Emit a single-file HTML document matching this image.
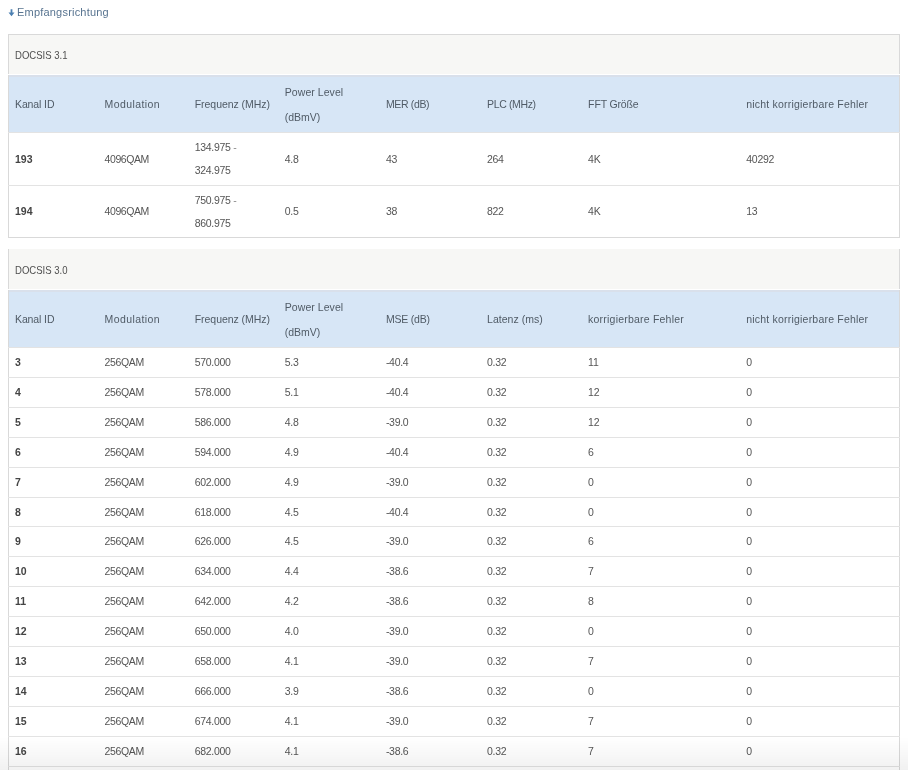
<!DOCTYPE html>
<html><head><meta charset="utf-8"><style>
body{-webkit-font-smoothing:antialiased}
.t,.link{will-change:transform}
html,body{margin:0;padding:0;background:#fff;width:908px;height:770px;overflow:hidden;position:relative}
body{font-family:"Liberation Sans",sans-serif;color:#555;font-size:10.5px}
.link{position:absolute;left:0;top:0;width:200px;height:30px;color:#587490;font-size:11px;white-space:nowrap}
.link svg{position:absolute;left:8px;top:9px}
.link span{position:absolute;left:17px;top:5px;letter-spacing:0.2px;line-height:14px}
.bot{position:absolute;left:0;top:737px;width:908px;height:33px;background:linear-gradient(rgba(0,0,0,0),rgba(0,0,0,0.055))}
.t{position:absolute;left:8px;width:892px;border-collapse:collapse;table-layout:fixed;border:1px solid #d9d9d9}
.t td,.t th{padding:0 0 0 6px;text-align:left;font-weight:normal;vertical-align:middle;white-space:nowrap;overflow:hidden}
.t2{border-top:0}
.t2 .cap td{height:39px;padding-top:1px}
.cap td{height:39px;background:#f7f7f5;border-bottom:1px solid #fff;color:#4f4f4f}
.hd th{height:55px;padding-top:2px;background:#d7e6f6;box-shadow:inset 0 2px 0 #d9e0eb;line-height:25px;color:#505b66}
.r2 td{height:52px;line-height:23px;border-top:1px solid #e3e3e3}
.r1 td{height:28px;padding-bottom:1px;border-top:1px solid #e3e3e3}
.r1.short td{height:27px}
.r2.short td{height:51px}
.r1 td,.r2 td{letter-spacing:-0.28px}
.r1 td:first-child,.r2 td:first-child{font-weight:bold;color:#444;letter-spacing:0}
.hy{color:#8a8a8a;letter-spacing:0}
</style></head><body>
<div class="link"><svg width="7" height="8" viewBox="0 0 7 8"><path d="M2.6 0.3H4.4V3.4H6.5L3.5 7.2L0.5 3.4H2.6Z" fill="#4c80b2"/></svg><span>Empfangsrichtung</span></div>
<table class="t" style="top:34px"><colgroup><col style="width:90px"><col style="width:90px"><col style="width:90px"><col style="width:101px"><col style="width:101px"><col style="width:101px"><col style="width:158px"><col style="width:159px"></colgroup><tr class="cap"><td colspan="8"><span style="display:inline-block;transform:scaleX(0.91);transform-origin:0 50%">DOCSIS 3.1</span></td></tr><tr class="hd"><th><span style="letter-spacing:-0.114px">Kanal ID</span></th><th><span style="letter-spacing:0.401px">Modulation</span></th><th><span style="letter-spacing:-0.038px">Frequenz (MHz)</span></th><th><span style="letter-spacing:0.06px">Power Level</span><br><span style="letter-spacing:-0.04px">(dBmV)</span></th><th><span style="letter-spacing:-0.34px">MER (dB)</span></th><th><span style="letter-spacing:-0.35px">PLC (MHz)</span></th><th><span style="letter-spacing:-0.145px">FFT Größe</span></th><th><span style="letter-spacing:0.204px">nicht korrigierbare Fehler</span></th></tr><tr class="r2"><td>193</td><td><span style="letter-spacing:-0.43px">4096QAM</span></td><td>134.975 <span class=hy>-</span><br>324.975</td><td>4.8</td><td>43</td><td>264</td><td>4K</td><td>40292</td></tr><tr class="r2 short"><td>194</td><td><span style="letter-spacing:-0.43px">4096QAM</span></td><td>750.975 <span class=hy>-</span><br>860.975</td><td>0.5</td><td>38</td><td>822</td><td>4K</td><td>13</td></tr></table>
<table class="t t2" style="top:249px"><colgroup><col style="width:90px"><col style="width:90px"><col style="width:90px"><col style="width:101px"><col style="width:101px"><col style="width:101px"><col style="width:158px"><col style="width:159px"></colgroup><tr class="cap"><td colspan="8"><span style="display:inline-block;transform:scaleX(0.91);transform-origin:0 50%">DOCSIS 3.0</span></td></tr><tr class="hd"><th><span style="letter-spacing:-0.114px">Kanal ID</span></th><th><span style="letter-spacing:0.401px">Modulation</span></th><th><span style="letter-spacing:-0.038px">Frequenz (MHz)</span></th><th><span style="letter-spacing:0.06px">Power Level</span><br><span style="letter-spacing:-0.04px">(dBmV)</span></th><th><span style="letter-spacing:-0.2px">MSE (dB)</span></th><th><span style="letter-spacing:0.04px">Latenz (ms)</span></th><th><span style="letter-spacing:0.211px">korrigierbare Fehler</span></th><th><span style="letter-spacing:0.204px">nicht korrigierbare Fehler</span></th></tr><tr class="r1"><td>3</td><td><span style="letter-spacing:-0.36px">256QAM</span></td><td>570.000</td><td>5.3</td><td>-40.4</td><td>0.32</td><td>11</td><td>0</td></tr><tr class="r1"><td>4</td><td><span style="letter-spacing:-0.36px">256QAM</span></td><td>578.000</td><td>5.1</td><td>-40.4</td><td>0.32</td><td>12</td><td>0</td></tr><tr class="r1"><td>5</td><td><span style="letter-spacing:-0.36px">256QAM</span></td><td>586.000</td><td>4.8</td><td>-39.0</td><td>0.32</td><td>12</td><td>0</td></tr><tr class="r1"><td>6</td><td><span style="letter-spacing:-0.36px">256QAM</span></td><td>594.000</td><td>4.9</td><td>-40.4</td><td>0.32</td><td>6</td><td>0</td></tr><tr class="r1"><td>7</td><td><span style="letter-spacing:-0.36px">256QAM</span></td><td>602.000</td><td>4.9</td><td>-39.0</td><td>0.32</td><td>0</td><td>0</td></tr><tr class="r1 short"><td>8</td><td><span style="letter-spacing:-0.36px">256QAM</span></td><td>618.000</td><td>4.5</td><td>-40.4</td><td>0.32</td><td>0</td><td>0</td></tr><tr class="r1"><td>9</td><td><span style="letter-spacing:-0.36px">256QAM</span></td><td>626.000</td><td>4.5</td><td>-39.0</td><td>0.32</td><td>6</td><td>0</td></tr><tr class="r1"><td>10</td><td><span style="letter-spacing:-0.36px">256QAM</span></td><td>634.000</td><td>4.4</td><td>-38.6</td><td>0.32</td><td>7</td><td>0</td></tr><tr class="r1"><td>11</td><td><span style="letter-spacing:-0.36px">256QAM</span></td><td>642.000</td><td>4.2</td><td>-38.6</td><td>0.32</td><td>8</td><td>0</td></tr><tr class="r1"><td>12</td><td><span style="letter-spacing:-0.36px">256QAM</span></td><td>650.000</td><td>4.0</td><td>-39.0</td><td>0.32</td><td>0</td><td>0</td></tr><tr class="r1"><td>13</td><td><span style="letter-spacing:-0.36px">256QAM</span></td><td>658.000</td><td>4.1</td><td>-39.0</td><td>0.32</td><td>7</td><td>0</td></tr><tr class="r1"><td>14</td><td><span style="letter-spacing:-0.36px">256QAM</span></td><td>666.000</td><td>3.9</td><td>-38.6</td><td>0.32</td><td>0</td><td>0</td></tr><tr class="r1"><td>15</td><td><span style="letter-spacing:-0.36px">256QAM</span></td><td>674.000</td><td>4.1</td><td>-39.0</td><td>0.32</td><td>7</td><td>0</td></tr><tr class="r1"><td>16</td><td><span style="letter-spacing:-0.36px">256QAM</span></td><td>682.000</td><td>4.1</td><td>-38.6</td><td>0.32</td><td>7</td><td>0</td></tr><tr class="r1"><td colspan="8"></td></tr></table>
<div class="bot"></div>
</body></html>
